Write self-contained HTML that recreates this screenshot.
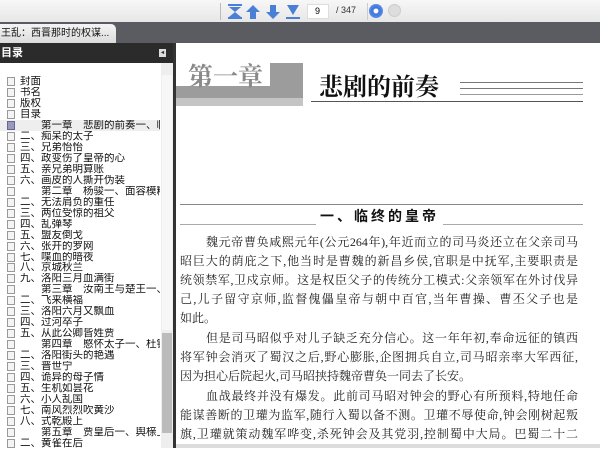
<!DOCTYPE html>
<html><head><meta charset="utf-8"><style>
*{margin:0;padding:0;box-sizing:border-box}
body{width:600px;height:448px;overflow:hidden;background:#fff;font-family:"Liberation Sans","Noto Sans CJK SC",sans-serif;position:relative}
.tb{position:absolute;left:0;top:0;width:600px;height:23px;background:linear-gradient(#f7f7f7,#e6e6e6)}
.bar{position:absolute;left:0;top:22px;width:600px;height:21px;background:#5b5b62}
.tab{position:absolute;left:0;top:24px;width:116px;height:19px;background:linear-gradient(#f4f4f4,#dcdcdc);border-radius:0 5px 0 0;font-size:10px;line-height:19px;padding-left:1px;color:#111}
.side{position:absolute;left:0;top:43px;width:173px;height:405px;background:#fff}
.sh{height:20px;background:#2b2b2b;color:#fff;font-size:11px;font-weight:bold;line-height:20px;padding-left:1px}
.item{position:absolute;left:0;font-size:10.5px;line-height:11px;height:11px;white-space:nowrap;color:#111}
.cb{position:absolute;left:7px;top:1px;width:8px;height:9px;border:1px solid #999;background:#f4f4f4}
.t{position:absolute;left:20px}
.main{position:absolute;left:173px;top:43px;width:427px;height:405px;border-left:3px solid #333;overflow:hidden}
p{position:absolute;left:4px;width:398px;font-size:12px;line-height:19px;color:#222;font-family:"Liberation Serif","Noto Serif CJK SC",serif;text-align:justify;text-align-last:justify;white-space:nowrap;overflow:hidden}
</style></head><body>
<div class="tb">
<div style="position:absolute;left:220px;top:3px;width:1px;height:17px;background:#bbb"></div>
<svg style="position:absolute;left:226px;top:3px" width="80" height="17">
<g fill="#4a7fd6"><rect x="2" y="1" width="14" height="2"/><polygon points="3,4 15,4 9,9"/><polygon points="3,14 15,14 9,9"/><rect x="2" y="14" width="14" height="2"/>
<polygon points="27,2 34,9 30,9 30,16 24,16 24,9 20,9"/>
<polygon points="47,16 54,9 50,9 50,2 44,2 44,9 40,9"/>
<rect x="60" y="14" width="14" height="2"/><polygon points="61,2 73,2 67,12"/></g></svg>
<div style="position:absolute;left:307px;top:4px;width:22px;height:15px;background:#fff;border:1px solid #ddd;font-size:9px;line-height:13px;padding-left:7px">9</div>
<div style="position:absolute;left:336px;top:5px;font-size:9px;color:#333">/ 347</div>
<div style="position:absolute;left:367px;top:3px;width:1px;height:17px;background:#ccc"></div>
<div style="position:absolute;left:369px;top:4px;width:14px;height:14px;border-radius:50%;background:radial-gradient(#fff 20%,#3b73d9 30%,#6fa0ee)"></div>
<div style="position:absolute;left:388px;top:4px;width:13px;height:13px;border-radius:50%;background:#ddd;border:1px solid #ccc"></div>
</div>
<div class="bar"></div>
<div class="tab">王乱：西晋那时的权谋... &nbsp;<b>✕</b></div>
<div class="side">
<div class="sh">目录<span style="position:absolute;left:159px;top:6px;width:7px;height:8px;background:#ddd;font-size:6px;color:#333;line-height:8px;text-align:center">◂</span></div>
<div style="position:absolute;left:161px;top:20px;width:12px;height:385px;background:#eee"><div style="position:absolute;left:1px;top:12px;width:10px;height:255px;background:#f7f7f7"></div><div style="position:absolute;left:1px;top:270px;width:10px;height:100px;background:#bbb"></div></div>
<div id="list"></div>
</div>
<div class="main">
<div style="position:absolute;left:0;top:20px;width:127px;height:43px;background:#9c9c9c"></div>
<div style="position:absolute;left:0;top:20px;width:94px;height:23px;background:#fff"></div>
<div style="position:absolute;left:0;top:55px;width:127px;height:8px;background:#c4c4c4"></div>
<div style="position:absolute;left:12px;top:17px;font-size:25px;font-weight:bold;color:#8a8a8a;font-family:'Noto Serif CJK SC',serif;line-height:30px">第一章</div>
<div style="position:absolute;left:143px;top:27px;font-size:24px;font-weight:bold;color:#111;font-family:'Noto Serif CJK SC',serif;line-height:30px">悲剧的前奏</div>
<div style="position:absolute;left:135px;top:58px;width:272px;height:1px;background:#555"></div>
<div style="position:absolute;left:284px;top:39px;width:123px;height:1px;background:#777"></div>
<div style="position:absolute;left:284px;top:45px;width:123px;height:1px;background:#777"></div>
<div style="position:absolute;left:284px;top:51px;width:123px;height:1px;background:#999"></div>
<div style="position:absolute;left:4px;top:161px;width:403px;height:1px;background:#888"></div>
<div style="position:absolute;left:4px;top:181px;width:403px;height:1px;background:#aaa"></div>
<div style="position:absolute;left:140px;top:162px;background:#fff;padding:0 4px;font-size:14px;font-weight:bold;letter-spacing:3px;color:#111;font-family:'Noto Sans CJK SC',sans-serif;line-height:22px">一、临终的皇帝</div>
<p style="top:190px;padding-left:26px">魏元帝曹奂咸熙元年(公元264年),年近而立的司马炎还立在父亲司马</p>
<p style="top:209px">昭巨大的荫庇之下,他当时是曹魏的新昌乡侯,官职是中抚军,主要职责是</p>
<p style="top:228px">统领禁军,卫戍京师。这是权臣父子的传统分工模式:父亲领军在外讨伐异</p>
<p style="top:247px">己,儿子留守京师,监督傀儡皇帝与朝中百官,当年曹操、曹丕父子也是</p>
<p style="top:266px;text-align-last:left">如此。</p>
<p style="top:286px;padding-left:26px">但是司马昭似乎对儿子缺乏充分信心。这一年年初,奉命远征的镇西</p>
<p style="top:305px">将军钟会消灭了蜀汉之后,野心膨胀,企图拥兵自立,司马昭亲率大军西征,</p>
<p style="top:324px;text-align-last:left">因为担心后院起火,司马昭挟持魏帝曹奂一同去了长安。</p>
<p style="top:344px;padding-left:26px">血战最终并没有爆发。此前司马昭对钟会的野心有所预料,特地任命</p>
<p style="top:363px">能谋善断的卫瓘为监军,随行入蜀以备不测。卫瓘不辱使命,钟会刚树起叛</p>
<p style="top:382px">旗,卫瓘就策动魏军哗变,杀死钟会及其党羽,控制蜀中大局。巴蜀二十二</p>
<div style="position:absolute;left:0;top:401px;width:427px;height:4px;background:#ddd"></div>
</div>
<script>
var items=["封面","书名","版权","目录","　　第一章　悲剧的前奏一、临终","二、痴呆的太子","三、兄弟怡怡","四、政变伤了皇帝的心","五、亲兄弟明算账","六、画皮的人撕开伪装","　　第二章　杨骏一、面容模糊的","二、无法肩负的重任","三、两位受惊的祖父","四、乱弹琴","五、盟友倒戈","六、张开的罗网","七、喋血的暗夜","八、京城秋兰","九、洛阳三月血满街","　　第三章　汝南王与楚王一、凶","二、飞来横福","三、洛阳六月又飘血","四、过河卒子","五、从此公卿皆姓贾","　　第四章　愍怀太子一、杜锡生","二、洛阳街头的艳遇","三、晋世宁","四、诡异的母子情","五、生机如昙花","六、小人乱国","七、南风烈烈吹黄沙","八、式乾殿上","　　第五章　贾皇后一、舆榇上表","二、黄雀在后"];
var h="";for(var i=0;i<items.length;i++){var y=33+i*10.97;h+='<div class="item" style="top:'+y+'px;width:160px;overflow:hidden'+(i==4?';background:#eee':'')+'"><span class="cb"'+(i==4?' style="background:#99b;border-color:#669"':'')+'></span><span class="t">'+items[i]+'</span></div>';}
document.getElementById("list").innerHTML=h;
</script>
</body></html>
